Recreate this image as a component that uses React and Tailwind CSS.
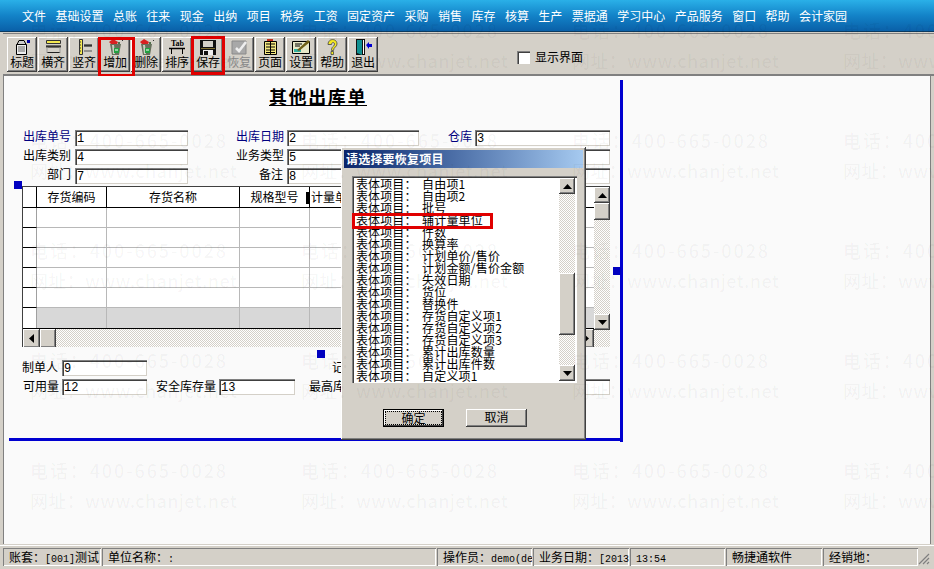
const cjk = { fontFamily: '"Noto Sans CJK SC", sans-serif' };

const menus = ['文件','基础设置','总账','往来','现金','出纳','项目','税务','工资','固定资产','采购','销售','库存','核算','生产','票据通','学习中心','产品服务','窗口','帮助','会计家园'];

const raised = 'bg-[#d4d0c8] shadow-[inset_-1px_-1px_0_#404040,inset_1px_1px_0_#fff,inset_-2px_-2px_0_#808080]';
const hatch = 'bg-[repeating-conic-gradient(#d4d0c8_0_25%,#fff_0_50%)] bg-[length:2px_2px]';

function Up() { return <svg width="9" height="5" viewBox="0 0 9 5"><path d="M4.5 0 9 5H0z" fill="#000" /></svg>; }
function Down() { return <svg width="9" height="5" viewBox="0 0 9 5"><path d="M4.5 5 9 0H0z" fill="#000" /></svg>; }
function Left() { return <svg width="5" height="9" viewBox="0 0 5 9"><path d="M0 4.5 5 0v9z" fill="#000" /></svg>; }
function Right() { return <svg width="5" height="9" viewBox="0 0 5 9"><path d="M5 4.5 0 0v9z" fill="#000" /></svg>; }

const Icons = {
  title: <svg width="22" height="16" viewBox="0 0 22 16"><path d="M5.5 5.5h10v10h-10z" fill="#eee" stroke="#000" /><path d="M7 8h7M7 10h7M7 12h7" stroke="#666" /><path d="M8 1.5h5l2 4H6z" fill="#ccc" stroke="#000" /><path d="M16 1h3v3h-3z" fill="#0000a0" /></svg>,
  hor: <svg width="22" height="16" viewBox="0 0 22 16"><path d="M4.5 1.5h14v3h-14z" fill="#f4e850" stroke="#333" /><path d="M4 7h15M4 8h15" stroke="#000" /><path d="M5 13.5h13" stroke="#222" /><path d="M5 8v6M18 8v6" stroke="#999" /></svg>,
  ver: <svg width="22" height="16" viewBox="0 0 22 16"><path d="M6.5 0.5h3v15h-3z" fill="#f4e850" stroke="#333" /><path d="M7 3h1M7 6h1M7 9h1M7 12h1" stroke="#333" /><path d="M11 6h8M11 7h8" stroke="#000" /><path d="M11 12h8" stroke="#555" /></svg>,
  add: <svg width="22" height="16" viewBox="0 0 22 16"><path d="M6 5h11l-2 11H8z" fill="#66705c" /><path d="M8 6h2l1 9H9z" fill="#c8d0c0" /><path d="M10 9h5v5h-5z" fill="#22a040" /><path d="M11 11h3" stroke="#fff" /><path d="M5 3l4-3 5 3 -1 2H7z" fill="#d82020" /><path d="M14 3h2v2h-2z" fill="#50704a" /><path d="M18 1h1v1h-1z" fill="#333" /></svg>,
  save: <svg width="22" height="16" viewBox="0 0 22 16"><path d="M3 1h16v15H3z" fill="#111" /><path d="M6 2h10v6H6z" fill="#d4d0c8" /><path d="M4 9h14v1H4z" fill="#807030" /><path d="M6 11h10v5H6z" fill="#eee" /><path d="M7 12h4v4H7z" fill="#111" /></svg>,
  restore: <svg width="22" height="16" viewBox="0 0 22 16"><path d="M4 2h14v13H4z" fill="#a8a8a8" stroke="#8a8a8a" /><path d="M8 9l3 3 7-9" fill="none" stroke="#eee" strokeWidth="2.5" /></svg>,
  page: <svg width="22" height="16" viewBox="0 0 22 16"><path d="M5.5 2.5h12v13h-12z" fill="#f4e880" stroke="#000" /><path d="M7 5h9M7 8h9M7 11h9M7 13.5h9M11.5 3v12" stroke="#000" /><path d="M8 0h6v2H8z" fill="#c03020" /></svg>,
  set: <svg width="22" height="16" viewBox="0 0 22 16"><path d="M2.5 2.5h17v12h-17z" fill="#e8e8c8" stroke="#000" /><path d="M4 10h7v3H4z" fill="#30b0a0" /><path d="M7 11 18 1l2 2-11 9z" fill="#706018" /><path d="M5 5h7M5 7h5" stroke="#000" /></svg>,
  help: <svg width="22" height="16" viewBox="0 0 22 16"><path d="M7 5.5c0-6.500 9-6.500 9-.5 0 3-3.500 3-3.500 6.500h-2c0-4.500 3-4 3-6.500 0-2-3-2-3 .5z" fill="#f4e820" stroke="#444" strokeWidth=".8" /><path d="M10 12.500h2.500v3H10z" fill="#f4e820" stroke="#444" strokeWidth=".8" /></svg>,
  exit: <svg width="22" height="16" viewBox="0 0 22 16"><path d="M4 0h9v16H4z" fill="#111" /><path d="M5 1h5v15l-5-2z" fill="#109090" /><path d="M11 1h1v14h-1z" fill="#fff" /><path d="M14 6l3-3v2h3v3h-3v2z" fill="#0000d0" /></svg>,
  tab: <svg width="22" height="16" viewBox="0 0 22 16"><text x="5" y="7" fontSize="8" fontFamily="Liberation Serif" fontWeight="700">Tab</text><path d="M3 9.500h16" stroke="#000" strokeWidth="1.500" /><path d="M5.500 9v6M16.500 9v6" stroke="#000" /></svg>,
};

const tools = [
  ['标题', 'title'], ['横齐', 'hor'], ['竖齐', 'ver'], ['增加', 'add'], ['删除', 'add'], ['排序', 'tab'],
  ['保存', 'save'], ['恢复', 'restore', true], ['页面', 'page'], ['设置', 'set'], ['帮助', 'help'], ['退出', 'exit'],
];

function ToolButton({ label, icon, disabled }) {
  return (
    <div className={`w-[30px] h-[35px] flex flex-col items-center ${raised}`}>
      <div className="h-[16px] mt-[2px] flex items-center justify-center">{Icons[icon]}</div>
      <span className={`text-[12px] leading-[14px] whitespace-nowrap tracking-[-0.2px] ${disabled ? 'text-[#888]' : 'text-black'}`}>{label}</span>
    </div>
  );
}

function Field({ className, children }) {
  return (
    <div className={`absolute bg-white h-[16px] pl-[2px] text-[12px] leading-[18px] text-black shadow-[inset_1px_1px_0_#808080,inset_2px_2px_0_#404040,inset_-1px_-1px_0_#d4d0c8] font-['Liberation_Mono'] ${className}`}>{children}</div>
  );
}

function Label({ className, children, blue }) {
  return <span className={`absolute text-[12px] leading-[14px] whitespace-nowrap ${blue ? 'text-[#000080]' : 'text-black'} ${className}`}>{children}</span>;
}

const items = ['自由项1','自由项2','批号','辅计量单位','件数','换算率','计划单价/售价','计划金额/售价金额','失效日期','货位','替换件','存货自定义项1','存货自定义项2','存货自定义项3','累计出库数量','累计出库件数','自定义项1'];

function GridTable() {
  const cols = ['w-[14px]', 'w-[70px]', 'w-[133px]', 'w-[70px]', 'flex-1'];
  const heads = ['', '存货编码', '存货名称', '规格型号', '计量单'];
  return (
    <div className="absolute left-[22px] top-[110px] w-[588px] h-[161px] bg-white border-l border-t border-[#404040] flex overflow-hidden">
      <div className="flex-1 min-w-0 flex flex-col relative">
        <div className="flex h-[21px] border-b border-black shrink-0">
          {heads.map((h, i) => (
            <div key={i} className={`${cols[i]} ${i === 4 ? 'text-left pl-[1px]' : 'text-center shrink-0 border-r border-black'} text-[12px] leading-[20px] overflow-hidden whitespace-nowrap`}>{h}</div>
          ))}
        </div>
        <div className="absolute left-[283px] top-[5px] w-[3px] h-[12px] bg-black" />
        {[0, 1, 2, 3, 4, 5].map((r) => (
          <div key={r} className="flex h-[20px] shrink-0">
            <div className={`${cols[0]} shrink-0 border-r border-[#a0a0a0] ${r < 5 ? 'border-b border-b-black' : ''}`} />
            {[1, 2, 3, 4].map((c) => (
              <div key={c} className={`${cols[c]} ${c < 4 ? 'shrink-0 border-r' : ''} border-[#b8b8b8] ${r === 5 ? 'bg-[#d8d8d8] border-b-0' : 'border-b'}`} />
            ))}
          </div>
        ))}
        <div className="border-t border-black flex h-[20px] shrink-0">
          <div className={`w-[17px] h-[19px] flex items-center justify-center ${raised}`}><Left /></div>
          <div className={`w-[16px] h-[19px] ${raised}`} />
          <div className={`flex-1 h-[19px] ${hatch}`} />
          <div className={`w-[15px] h-[19px] flex items-center justify-center ${raised}`}><Right /></div>
        </div>
      </div>
      <div className={`w-[16px] shrink-0 flex flex-col ${hatch}`}>
        <div className={`h-[16px] flex items-center justify-center ${raised}`}><Up /></div>
        <div className={`h-[17px] ${raised}`} />
        <div className="flex-1" />
        <div className={`h-[16px] flex items-center justify-center mb-[17px] ${raised}`}><Down /></div>
      </div>
    </div>
  );
}

function Dialog() {
  return (
    <div className="absolute left-[341px] top-[71px] w-[245px] h-[293px] bg-[#d4d0c8] shadow-[inset_-1px_-1px_0_#404040,inset_1px_1px_0_#fff,inset_-2px_-2px_0_#808080] p-[3px]">
      <div className="h-[18px] bg-gradient-to-r from-[#0a246a] to-[#a6caf0] text-white text-[12px] leading-[17px] font-bold pl-[2px] tracking-[0.2px]">请选择要恢复项目</div>
      <div className="mt-[8px] ml-[8px] w-[225px] h-[207px] bg-white shadow-[inset_1px_1px_0_#808080,inset_2px_2px_0_#404040,inset_-1px_-1px_0_#fff] flex pl-[4px] pt-[2px] pb-[2px] relative">
        <div className="flex-1">
          {items.map((t) => (
            <div key={t} className="flex h-[12px] text-[12px] leading-[12px] whitespace-nowrap text-black">
              <span className="w-[66px] shrink-0 tracking-[0.1px]">表体项目：</span>
              <span className="tracking-[0.2px]">{t}</span>
            </div>
          ))}
        </div>
        <div className={`w-[16px] mr-[2px] shrink-0 flex flex-col ${hatch}`}>
          <div className={`h-[16px] flex items-center justify-center ${raised}`}><Up /></div>
          <div className="h-[79px]" />
          <div className={`h-[62px] ${raised}`} />
          <div className="flex-1" />
          <div className={`h-[16px] flex items-center justify-center ${raised}`}><Down /></div>
        </div>
        <div className="absolute left-0 top-[37px] w-[141px] h-[16px] border-[3px] border-[#e00000]" />
      </div>
      <div className="flex mt-[26px] ml-[39px] gap-[22px]">
        <div className="w-[61px] h-[18px] bg-[#d4d0c8] border border-black p-[1px] shadow-[inset_-1px_-1px_0_#404040,inset_1px_1px_0_#fff]">
          <div className="h-full border border-dotted border-black text-center text-[12px] leading-[12px]">确定</div>
        </div>
        <div className={`w-[61px] h-[18px] text-center text-[12px] leading-[16px] ${raised}`}>取消</div>
      </div>
    </div>
  );
}

function Watermark() {
  const cells = Array.from({ length: 20 });
  return (
    <div className="absolute inset-0 overflow-hidden pointer-events-none pt-[15px] pl-[30px] grid grid-cols-[repeat(4,271px)] auto-rows-[110px] text-[rgba(0,0,0,0.04)] text-[18px] font-medium">
      {cells.map((_, i) => (
        <div key={i} className="leading-[30px] whitespace-nowrap">
          <div className="tracking-[1.9px]">电话：400-665-0028</div>
          <div className="tracking-[0.35px]">网址：www.chanjet.net</div>
        </div>
      ))}
    </div>
  );
}

function L({ children }) {
  return <span className="font-['Liberation_Mono'] text-[10px]">{children}</span>;
}

const status = [
  ['w-[98px]', <>账套：<L>[001]</L>测试</>],
  ['w-[334px]', <>单位名称：<L>:</L></>],
  ['w-[95px]', <>操作员：<L>demo(de</L></>],
  ['w-[96px]', <>业务日期：<L>[2013</L></>],
  ['w-[95px]', <L>13:54</L>],
  ['w-[96px]', '畅捷通软件'],
  ['flex-1', '经销地：'],
];

export default function App() {
  return (
    <div className="relative w-[934px] h-[569px] overflow-hidden bg-[#d4d0c8] flex flex-col text-black" style={cjk}>
      <div className="h-[32px] shrink-0 bg-gradient-to-b from-[#2ab0e8] via-[#1383c8] to-[#0a60a8] border-b border-[#0b3a60] flex items-center pl-[22px] gap-[9.45px] text-white text-[12px]">
        {menus.map((m) => <span key={m}>{m}</span>)}
      </div>
      <div className="h-[43px] shrink-0 mt-[1px] border-t border-[#808080] border-b-2 border-b-[#808080] ml-[3px] flex items-start pl-[4px] pt-[3px] gap-[1px] relative">
        {tools.map(([l, i, d]) => <ToolButton key={l} label={l} icon={i} disabled={d} />)}
        <div className="absolute left-[514px] top-[17px] w-[13px] h-[13px] bg-white shadow-[inset_1px_1px_0_#808080,inset_2px_2px_0_#404040]" />
        <span className="absolute left-[532px] top-[15px] text-[12px] leading-[15px]">显示界面</span>
        <div className="absolute left-[95px] top-[3px] w-[37px] h-[40px] border-[3px] border-[#e00000]" />
        <div className="absolute left-[188px] top-[2px] w-[34px] h-[39px] border-[3px] border-[#e00000]" />
      </div>
      <div className="flex-1 ml-[3px] mr-[3px] border-l border-[#808080] border-r bg-[#fafafa] relative min-h-0">
        <div className="absolute -left-[4px] top-0 w-[934px] h-[470px]">
          <div className="absolute left-[269px] top-[9px] text-[18px] leading-[22px] font-bold underline tracking-[1.6px] whitespace-nowrap">其他出库单</div>

          <div className="absolute left-[620px] top-[4px] w-[3px] h-[362px] bg-[#0000d0]" />
          <div className="absolute left-[9px] top-[362px] w-[614px] h-[3px] bg-[#0000d0]" />
          <div className="absolute left-[14px] top-[105px] w-[8px] h-[8px] bg-[#0000c0]" />
          <div className="absolute left-[317px] top-[274px] w-[8px] h-[8px] bg-[#0000c0]" />
          <div className="absolute left-[613px] top-[191px] w-[8px] h-[8px] bg-[#0000c0]" />

          <Label blue className="left-[23px] top-[53px]">出库单号</Label>
          <Field className="left-[75px] top-[54px] w-[113px]">1</Field>
          <Label blue className="left-[236px] top-[53px]">出库日期</Label>
          <Field className="left-[287px] top-[54px] w-[132px]">2</Field>
          <Label blue className="left-[448px] top-[53px]">仓库</Label>
          <Field className="left-[475px] top-[54px] w-[135px]">3</Field>

          <Label className="left-[23px] top-[72px]">出库类别</Label>
          <Field className="left-[75px] top-[73px] w-[113px]">4</Field>
          <Label className="left-[236px] top-[72px]">业务类型</Label>
          <Field className="left-[287px] top-[73px] w-[323px]">5</Field>

          <Label className="left-[47px] top-[91px]">部门</Label>
          <Field className="left-[75px] top-[92px] w-[113px]">7</Field>
          <Label className="left-[259px] top-[91px]">备注</Label>
          <Field className="left-[287px] top-[92px] w-[323px]">8</Field>

          <GridTable />

          <Label className="left-[22px] top-[284px]">制单人</Label>
          <Field className="left-[62px] top-[284px] w-[85px]">9</Field>
          <Label className="left-[332px] top-[284px]">记</Label>
          <Label className="left-[23px] top-[303px]">可用量</Label>
          <Field className="left-[62px] top-[303px] w-[85px]">12</Field>
          <Label className="left-[156px] top-[303px]">安全库存量</Label>
          <Field className="left-[219px] top-[303px] w-[76px]">13</Field>
          <Label className="left-[309px] top-[303px]">最高库存量</Label>
          <Field className="left-[375px] top-[303px] w-[235px]"></Field>

          <Dialog />
        </div>
      </div>
      <div className="h-[24px] shrink-0 mt-[1px] border-t border-white flex items-start pl-[3px] pr-[16px] pt-[2px] gap-[1px] relative">
        {status.map(([w, t], i) => (
          <div key={i} className={`${w} h-[18px] overflow-hidden whitespace-nowrap pl-[6px] text-[12px] leading-[18px] shadow-[inset_1px_1px_0_#808080,inset_-1px_-1px_0_#fff]`}>{t}</div>
        ))}
        <svg className="absolute right-[4px] bottom-[4px]" width="12" height="12" viewBox="0 0 12 12"><path d="M11 1 1 11M11 5 5 11M11 9 9 11" stroke="#808080" strokeWidth="1.2" /></svg>
      </div>
      <Watermark />
    </div>
  );
}
